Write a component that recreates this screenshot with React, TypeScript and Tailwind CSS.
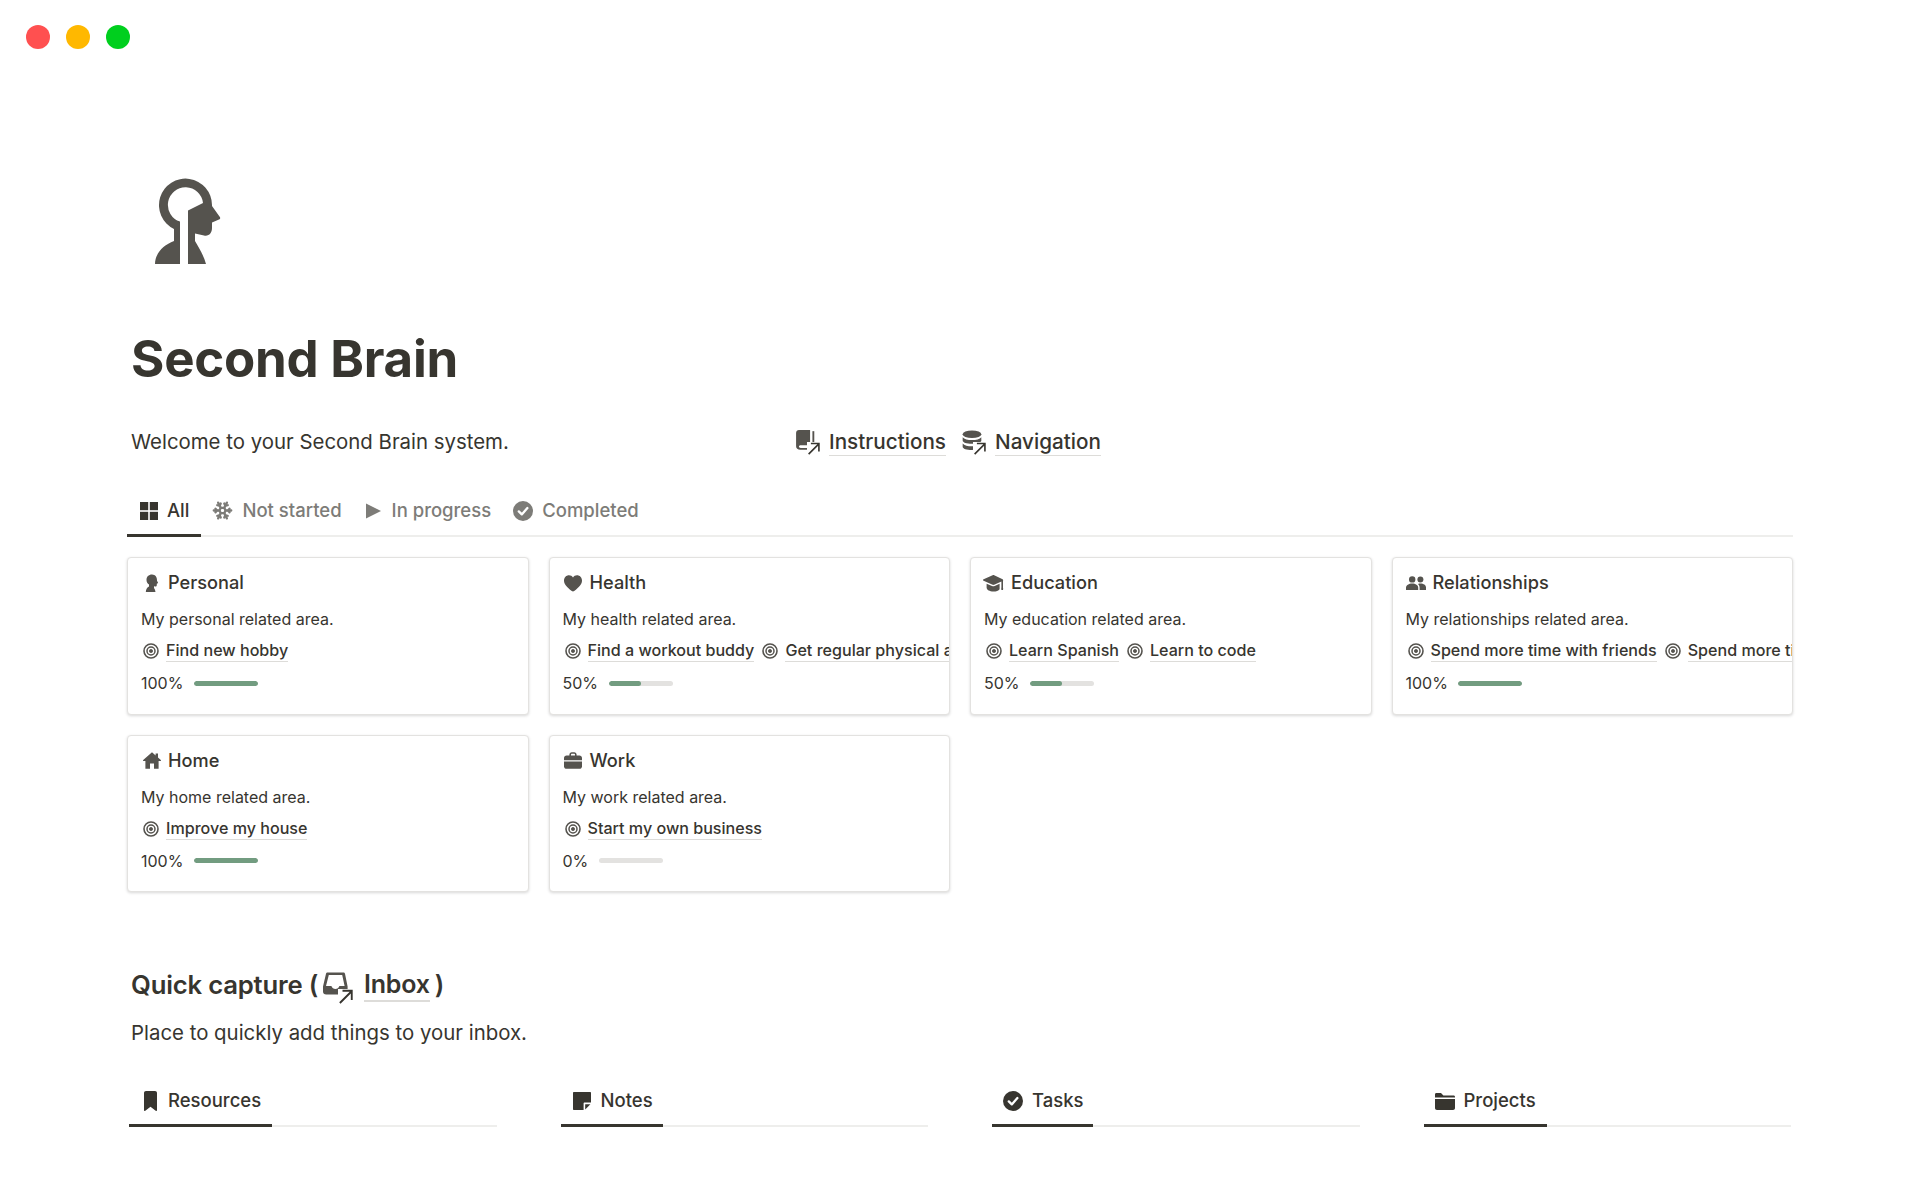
import { Snowflake } from "lucide-react"
import type { ReactNode } from "react"

type IconProps = { className?: string }

function LogoIcon({ className }: IconProps) {
  return (
    <svg viewBox="155 178 66 87" className={className} fill="currentColor">
      <path d="M180 264V221.6A17.6 17.6 0 1 1 203 203L188 210.5V264H206C204 256 199 248 195 241V233.5L204 235.5C209 236.5 212 233 212 228V222.5L219 219.5C220.5 219 220.5 217.5 219.5 216.5L212 206V205A26.5 26.5 0 1 0 174 229V241C163 245 155 254 155 264Z" />
    </svg>
  )
}

function HeadIcon({ className }: IconProps) {
  return (
    <svg viewBox="0 0 16 18" className={className} fill="currentColor">
      <path d="M8 0C4.6 0 2.5 2.4 2.5 5.4C2.5 7.5 3.6 9 5 10V12C3.2 12.8 2 14.6 1.8 17.6H11.5C11.3 16 10.8 14.6 10 13.6V11.8L11.4 12C12.4 12.1 12.8 11.3 12.8 10.4V9.2L14.2 8.4L13 6.2C13.2 2.8 11.4 0 8 0Z" />
    </svg>
  )
}

function HeartIcon({ className }: IconProps) {
  return (
    <svg viewBox="0 0 18 17" className={className} fill="currentColor">
      <path d="M9 16.6C8.6 16.6 8.2 16.4 7.8 16.1C3 12.4 0 9.5 0 5.6C0 2.5 2.3 0.3 5 0.3C6.7 0.3 8.1 1.1 9 2.6C9.9 1.1 11.3 0.3 13 0.3C15.7 0.3 18 2.5 18 5.6C18 9.5 15 12.4 10.2 16.1C9.8 16.4 9.4 16.6 9 16.6Z" />
    </svg>
  )
}

function CapIcon({ className }: IconProps) {
  return (
    <svg viewBox="0 0 21 17" className={className} fill="currentColor">
      <path d="M9.6 0.3 0.6 4.2C-0.2 4.6 -0.2 5.4 0.6 5.8L9.6 9.8C10.2 10 10.7 10 11.2 9.8L18.4 6.6V12.5C18.2 12.9 18.2 14 18.4 15H20C20.2 14 20.2 12.9 20 12.5V5.8C20.4 5.3 20.2 4.6 19.6 4.2L11.2 0.3C10.6 0 10.2 0 9.6 0.3Z" />
      <path d="M3.6 8.7V12.6C3.6 15 6.6 16.6 10.4 16.6C13.2 16.6 15.6 15.7 16.6 14.2V8.7L11.7 11C10.7 11.4 9.9 11.4 9 11Z" />
    </svg>
  )
}

function PeopleIcon({ className }: IconProps) {
  return (
    <svg viewBox="0 0 20 14" className={className} fill="currentColor">
      <circle cx="6.2" cy="3.4" r="3.2" />
      <circle cx="14.4" cy="3.4" r="3" />
      <path d="M0 14V11.8C0 9.2 2.8 7.6 6.2 7.6C9.6 7.6 12.2 9.2 12.2 11.8V14Z" />
      <path d="M13.6 14V11.6C13.6 10 13 8.8 12 8C12.9 7.7 13.7 7.6 14.4 7.6C17.6 7.6 20 9.2 20 11.6V14Z" />
    </svg>
  )
}

function HomeIcon({ className }: IconProps) {
  return (
    <svg viewBox="0 0 18 17" className={className} fill="currentColor">
      <path d="M9 0.2 12.6 3.4V1.4H15V5.6L17.8 8C18.2 8.5 17.9 9 17.4 9H15.6V16.8H11V11.4H7V16.8H2.4V9H0.6C0.1 9 -0.2 8.5 0.2 8Z" />
    </svg>
  )
}

function CaseIcon({ className }: IconProps) {
  return (
    <svg viewBox="0 0 18 17" className={className} fill="currentColor">
      <path d="M5.4 3.4V2.6C5.4 1.2 6.4 0.2 7.8 0.2H10.2C11.6 0.2 12.6 1.2 12.6 2.6V3.4H15.4C16.9 3.4 18 4.5 18 6V8.2H0V6C0 4.5 1.1 3.4 2.6 3.4ZM7 3.4H11V2.8C11 2.2 10.6 1.8 10 1.8H8C7.4 1.8 7 2.2 7 2.8Z" />
      <path d="M0 9.6H18V14.2C18 15.8 16.9 16.8 15.4 16.8H2.6C1.1 16.8 0 15.8 0 14.2Z" />
    </svg>
  )
}

function TargetIcon({ className }: IconProps) {
  return (
    <svg viewBox="0 0 16 16" className={className} fill="none" stroke="currentColor">
      <circle cx="8" cy="8" r="7" strokeWidth="1.6" />
      <circle cx="8" cy="8" r="4" strokeWidth="1.5" />
      <circle cx="8" cy="8" r="1.6" fill="currentColor" strokeWidth="0.8" />
    </svg>
  )
}

function GridIcon({ className }: IconProps) {
  return (
    <svg viewBox="0 0 18 18" className={className} fill="currentColor">
      <rect width="8.2" height="8.2" />
      <rect x="9.8" width="8.2" height="8.2" />
      <rect y="9.8" width="8.2" height="8.2" />
      <rect x="9.8" y="9.8" width="8.2" height="8.2" />
    </svg>
  )
}

function PlayIcon({ className }: IconProps) {
  return (
    <svg viewBox="0 0 15 16" className={className} fill="currentColor">
      <path d="M0 0.4 15 8 0 15.6Z" />
    </svg>
  )
}

function CheckCircleIcon({ className }: IconProps) {
  return (
    <svg viewBox="0 0 20 20" className={className}>
      <circle cx="10" cy="10" r="10" fill="currentColor" />
      <path d="M5.8 10.4 8.8 13.4 14.4 7" fill="none" stroke="white" strokeWidth="2.3" strokeLinecap="round" strokeLinejoin="round" />
    </svg>
  )
}

function BookmarkIcon({ className }: IconProps) {
  return (
    <svg viewBox="0 0 13 20" className={className} fill="currentColor">
      <path d="M2 0H11C12.2 0 13 0.8 13 2V19.2C13 19.9 12.3 20.2 11.7 19.7L6.5 15.8L1.3 19.7C0.7 20.2 0 19.9 0 19.2V2C0 0.8 0.8 0 2 0Z" />
    </svg>
  )
}

function NoteIcon({ className }: IconProps) {
  return (
    <svg viewBox="0 0 18 18" className={className} fill="currentColor">
      <path d="M1 0H17C17.6 0 18 0.4 18 1V10.6H11.6C11 10.6 10.6 11 10.6 11.6V18H1C0.4 18 0 17.6 0 17V1C0 0.4 0.4 0 1 0Z" />
      <path d="M12.2 12.2H17.4L12.2 17.4Z" />
    </svg>
  )
}

function FolderIcon({ className }: IconProps) {
  return (
    <svg viewBox="0 0 20 17" className={className} fill="currentColor">
      <path d="M0 1.4C0 0.6 0.6 0 1.4 0H6L8.4 2.6H18.6C19.4 2.6 20 3.2 20 4V4.4H0Z" />
      <path d="M0 6H20V15C20 16.2 19.2 17 18 17H2C0.8 17 0 16.2 0 15Z" />
    </svg>
  )
}

function BookIcon({ className }: IconProps) {
  return (
    <svg viewBox="0 0 17 18" className={className} fill="currentColor">
      <path d="M2.5 0H12V13H4C3 13 2.4 13.6 2.4 14.2C2.4 14.9 3 15.4 4 15.4H14V17H3.6C1.4 17 0 15.8 0 14V2.5C0 1 1 0 2.5 0Z" />
      <path d="M14 1H15.6V12H14Z" />
    </svg>
  )
}

function StackIcon({ className }: IconProps) {
  return (
    <svg viewBox="0 0 18 18" className={className} fill="currentColor">
      <ellipse cx="9" cy="3.4" rx="8.4" ry="3.4" />
      <path d="M0.6 6C2 7.8 5.2 8.6 9 8.6C12.8 8.6 16 7.8 17.4 6V9C17.4 10.8 13.8 12 9 12C4.2 12 0.6 10.8 0.6 9Z" />
      <path d="M0.6 11.6C2 13.4 5.2 14.2 9 14.2C12 14.2 14.4 13.8 16 12.8V14C15 16.6 12.4 17.6 9 17.6C4.2 17.6 0.6 16.4 0.6 14.6Z" />
    </svg>
  )
}

function InboxIcon({ className }: IconProps) {
  return (
    <svg viewBox="0 0 25 22" className={className} fill="currentColor">
      <path fillRule="evenodd" d="M4.6 0H20.4C21.2 0 21.8 0.5 22 1.2L24.6 14V19C24.6 20.8 23.4 22 21.4 22H3.2C1.2 22 0 20.8 0 19V14L3 1.2C3.2 0.5 3.8 0 4.6 0ZM5.8 2.4 3 13.4H8.4C9 15.4 10.6 16.4 12.4 16.4C14.2 16.4 15.8 15.4 16.4 13.4H21.6L19.2 2.4Z" />
    </svg>
  )
}

function LinkArrow({ className }: IconProps) {
  return (
    <svg viewBox="0 0 12 12" className={`absolute bottom-0 right-0 bg-white ${className}`} fill="none" stroke="#37352f" strokeWidth="1.5">
      <path d="M1.5 11.2 10.5 2.2M3.6 1.4H11V8.8" />
    </svg>
  )
}

const Tab = ({ icon, label, active }: { icon: ReactNode; label: string; active?: boolean }) => (
  <div className={`-mb-[2px] flex h-[49px] items-center gap-[9px] border-b-[3px] px-3 pb-[1px] text-[18.5px] font-medium ${active ? "border-[#37352f] text-[#37352f]" : "border-transparent text-[#7d7c78]"}`}>
    {icon}
    <span>{label}</span>
  </div>
)

const areas = [
  { name: "Personal", Icon: HeadIcon, iconClass: "h-[19px] w-[16px]", goals: ["Find new hobby"], pct: 100, desc: "My personal related area." },
  { name: "Health", Icon: HeartIcon, iconClass: "h-[17px] w-[18px]", goals: ["Find a workout buddy", "Get regular physical activity"], pct: 50, desc: "My health related area." },
  { name: "Education", Icon: CapIcon, iconClass: "-ml-[2px] h-[17px] w-[21px]", goals: ["Learn Spanish", "Learn to code"], pct: 50, desc: "My education related area." },
  { name: "Relationships", Icon: PeopleIcon, iconClass: "-ml-[1px] h-[14px] w-[20px]", goals: ["Spend more time with friends", "Spend more time with family"], pct: 100, desc: "My relationships related area." },
  { name: "Home", Icon: HomeIcon, iconClass: "h-[17px] w-[18px]", goals: ["Improve my house"], pct: 100, desc: "My home related area." },
  { name: "Work", Icon: CaseIcon, iconClass: "h-[17px] w-[18px]", goals: ["Start my own business"], pct: 0, desc: "My work related area." },
]

function AreaCard({ area }: { area: (typeof areas)[number] }) {
  const { Icon } = area
  return (
    <div className="h-[157.5px] overflow-hidden rounded-[4px] border border-[#e3e2e0] bg-white pt-[13px] shadow-[0_1px_3px_rgba(15,15,15,0.16)]">
      <div className="flex h-[24px] items-center gap-[6px] pl-[13px] text-[18.2px] font-medium text-[#37352f]">
        <span className="flex w-[21px] shrink-0 justify-center text-[#55534e]">
          <Icon className={area.iconClass} />
        </span>
        <span>{area.name}</span>
      </div>
      <div className="mt-[12px] flex h-[24px] items-center pl-[13px] text-[16px] text-[#37352f]">{area.desc}</div>
      <div className="mt-[8px] flex h-[24px] items-center gap-[8px] whitespace-nowrap pl-[15px] text-[16.1px] font-medium text-[#37352f]">
        {area.goals.map((goal) => (
          <span key={goal} className="flex shrink-0 items-center gap-[7px]">
            <TargetIcon className="h-[16px] w-[16px] shrink-0 text-[#55534e]" />
            <span className="border-b border-[#dddcd9] leading-[21px]">{goal}</span>
          </span>
        ))}
      </div>
      <div className="mt-[8px] flex h-[24px] items-center gap-[10.5px] pl-[13px] text-[16px] text-[#37352f]">
        <span>{area.pct}%</span>
        <div className="h-[5px] w-[64px] overflow-hidden rounded-full bg-[#e3e2e0]">
          <div className="h-full rounded-full bg-[#729c80]" style={{ width: `${area.pct}%` }} />
        </div>
      </div>
    </div>
  )
}

const captures = [
  { label: "Resources", icon: <BookmarkIcon className="h-[20px] w-[13px]" />, width: "w-[143px]", pad: "gap-[11px] pl-[15px]" },
  { label: "Notes", icon: <NoteIcon className="h-[18px] w-[18px]" />, width: "w-[102px]", pad: "gap-[10px] pl-[12px]" },
  { label: "Tasks", icon: <CheckCircleIcon className="h-[20px] w-[20px]" />, width: "w-[101px]", pad: "gap-[9px] pl-[11px]" },
  { label: "Projects", icon: <FolderIcon className="h-[17px] w-[20px]" />, width: "w-[123px]", pad: "gap-[9px] pl-[11px]" },
]

export default function App() {
  return (
    <div className="min-h-[1200px] bg-white pb-[74px] font-['Inter',sans-serif] text-[#37352f]">
      <div className="flex gap-4 pl-[26px] pt-[25px]">
        <div className="h-6 w-6 rounded-full bg-[#ff5050]" />
        <div className="h-6 w-6 rounded-full bg-[#ffb800]" />
        <div className="h-6 w-6 rounded-full bg-[#00cf1e]" />
      </div>

      <div className="mx-[127px] mt-[129px]">
        <LogoIcon className="ml-[28px] h-[87px] w-[66px] text-[#55534e]" />
        <h1 className="mt-[64px] pl-[4px] text-[51px] font-bold leading-[60px] tracking-[-0.25px]">Second Brain</h1>

        <div className="mt-[38px] flex h-[30px] items-center pl-[4px] text-[20.4px]">
          <p className="w-[665px] shrink-0">Welcome to your Second Brain system.</p>
          <div className="flex items-center gap-[16px] text-[20.7px] font-medium">
            <span className="flex items-center gap-[9px]">
              <span className="relative h-[25px] w-[24px] shrink-0 text-[#55534e]">
                <BookIcon className="h-[21px] w-[20px]" />
                <LinkArrow className="h-[13px] w-[13px]" />
              </span>
              <span className="border-b border-[#dddcd9] leading-[27px]">Instructions</span>
            </span>
            <span className="flex items-center gap-[9px]">
              <span className="relative h-[25px] w-[24px] shrink-0 text-[#55534e]">
                <StackIcon className="h-[21px] w-[20px]" />
                <LinkArrow className="h-[13px] w-[13px]" />
              </span>
              <span className="border-b border-[#dddcd9] leading-[27px]">Navigation</span>
            </span>
          </div>
        </div>

        <div className="mt-[31px] flex border-b-2 border-[#eeeeec]">
          <Tab active icon={<GridIcon className="ml-[1px] h-[18px] w-[18px]" />} label="All" />
          <Tab icon={<Snowflake className="-ml-[1px] h-[21px] w-[21px]" strokeWidth={2.6} />} label="Not started" />
          <Tab icon={<PlayIcon className="mr-[2px] h-[16px] w-[15px]" />} label="In progress" />
          <Tab icon={<CheckCircleIcon className="-ml-[2px] h-[20px] w-[20px]" />} label="Completed" />
        </div>

        <div className="mt-[20px] grid grid-cols-4 gap-5">
          {areas.map((area) => (
            <AreaCard key={area.name} area={area} />
          ))}
        </div>

        <h2 className="mt-[75px] flex h-[36px] items-center pl-[4px] text-[25.7px] font-semibold tracking-[-0.2px]">
          <span>Quick capture (</span>
          <span className="relative ml-[5px] mt-[6px] h-[32px] w-[30px] shrink-0 text-[#55534e]">
            <InboxIcon className="h-[23px] w-[25px]" />
            <LinkArrow className="h-[15px] w-[15px]" />
          </span>
          <span className="ml-[11px] border-b-2 border-[#dddcd9] text-[25px] leading-[32px]">Inbox</span>
          <span className="ml-[5px]">)</span>
        </h2>
        <p className="mt-[15px] flex h-[30px] items-center pl-[4px] text-[20.4px]">Place to quickly add things to your inbox.</p>

        <div className="mt-[31px] grid grid-cols-4 gap-[64px] px-[2px]">
          {captures.map((c) => (
            <div key={c.label} className="border-b-2 border-[#eeeeec]">
              <div className={`-mb-[2px] flex h-[48px] items-center border-b-[3px] border-[#37352f] pb-[1px] text-[18.5px] font-medium ${c.width} ${c.pad}`}>
                {c.icon}
                <span>{c.label}</span>
              </div>
            </div>
          ))}
        </div>
      </div>
    </div>
  )
}
